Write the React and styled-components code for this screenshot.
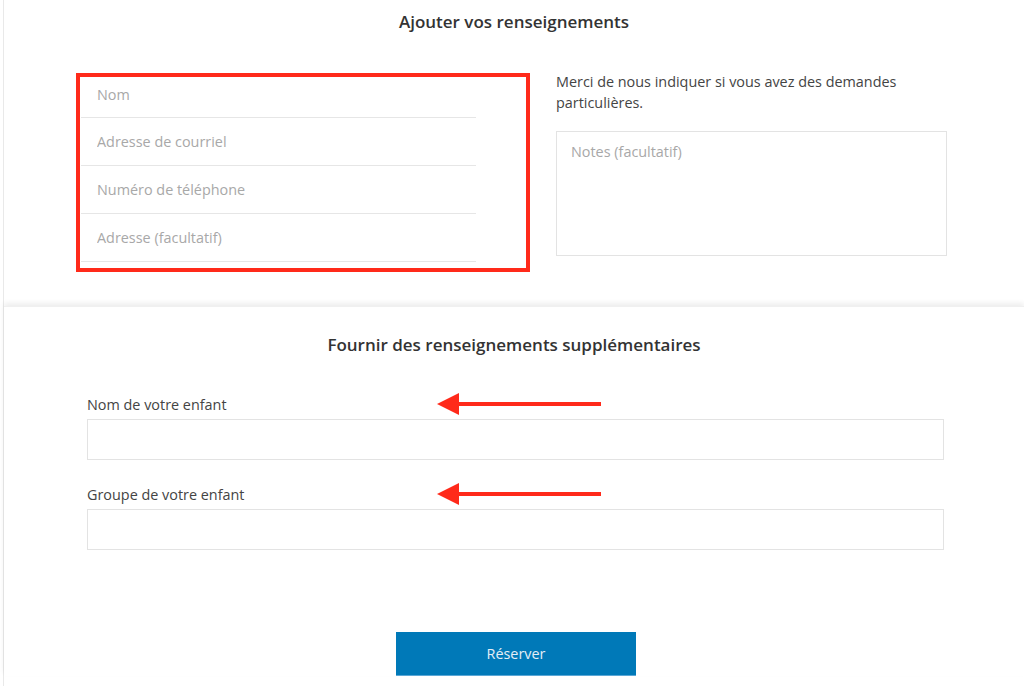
import React from 'react';
import styled, { createGlobalStyle } from 'styled-components';

const GlobalStyle = createGlobalStyle`
  html, body {
    margin: 0;
    padding: 0;
    background: #ffffff;
  }
  body {
    font-family: 'Open Sans', 'Noto Sans', sans-serif;
    color: #333333;
    overflow: hidden;
  }
  * {
    box-sizing: border-box;
  }
`;

const SPage = styled.div`
  margin-left: 3px;
  border-left: 1px solid #e9e9e9;
  min-height: 686px;
`;

const STopSection = styled.section`
  height: 306px;
  padding-top: 10px;
`;

const SBottomSection = styled.section`
  box-shadow: 0 -3px 5px rgba(0, 0, 0, 0.07);
  border-top: 1px solid #f0f0f0;
  padding-top: 26px;
`;

const STitle = styled.h2`
  margin: 0;
  text-align: center;
  font-size: 17px;
  font-weight: 600;
  line-height: 24px;
  color: #333333;
`;

const SColumns = styled.div`
  display: grid;
  grid-template-columns: 454px 391px;
  column-gap: 26px;
  margin: 39px 0 0 72px;
`;

const SHighlightBox = styled.div`
  border: 4px solid #ff2a1a;
  height: 199px;
  padding: 0 50px 0 1px;
`;

const SLineInput = styled.input`
  display: block;
  width: 100%;
  height: ${(props) => (props.$first ? '41px' : '48px')};
  padding: ${(props) => (props.$first ? '0 16px 6px' : '0 16px')};
  border: none;
  border-bottom: 1px solid #e6e6e6;
  outline: none;
  background: transparent;
  font-family: inherit;
  font-size: 14.4px;
  color: #333333;
  &::placeholder {
    color: #a8a8a8;
  }
`;

const SNotesColumn = styled.div`
  display: flex;
  flex-direction: column;
`;

const SHint = styled.p`
  margin: -2px 0 0;
  font-size: 14.4px;
  line-height: 21px;
  color: #444444;
`;

const SNotes = styled.textarea`
  margin-top: 18px;
  width: 391px;
  height: 125px;
  resize: none;
  border: 1px solid #e3e3e3;
  padding: 10px 14px;
  outline: none;
  font-family: inherit;
  font-size: 14.4px;
  line-height: 20px;
  color: #333333;
  &::placeholder {
    color: #a8a8a8;
  }
`;

const SFields = styled.div`
  width: 857px;
  margin: 36px 0 0 83px;
  display: flex;
  flex-direction: column;
  gap: 23px;
`;

const SField = styled.div`
  position: relative;
  display: flex;
  flex-direction: column;
  gap: 2px;
`;

const SLabel = styled.label`
  font-size: 14.4px;
  line-height: 24px;
  color: #444444;
`;

const SBoxInput = styled.input`
  height: 41px;
  border: 1px solid #e3e3e3;
  padding: 0 14px;
  outline: none;
  font-family: inherit;
  font-size: 14.4px;
`;

const SArrow = styled.svg`
  position: absolute;
  left: 350px;
  top: -1px;
`;

const SActions = styled.div`
  display: flex;
  justify-content: center;
  padding: 82px 0 0 4px;
`;

const SButton = styled.button`
  width: 240px;
  height: 44px;
  border: none;
  border-bottom: 1px solid #5aa7d6;
  background: #0079b8;
  color: #e4eef6;
  font-family: inherit;
  font-size: 14.4px;
  cursor: pointer;
`;

function Arrow() {
  return (
    <SArrow width="166" height="24" viewBox="0 0 166 24">
      <line x1="18" y1="12" x2="164" y2="12" stroke="#ff2a1a" strokeWidth="4" />
      <polygon points="0,12 22,1 22,23" fill="#ff2a1a" />
    </SArrow>
  );
}

export default function App() {
  return (
    <>
      <GlobalStyle />
      <SPage>
        <STopSection>
          <STitle>Ajouter vos renseignements</STitle>
          <SColumns>
            <SHighlightBox>
              <SLineInput $first placeholder="Nom" />
              <SLineInput placeholder="Adresse de courriel" />
              <SLineInput placeholder="Numéro de téléphone" />
              <SLineInput placeholder="Adresse (facultatif)" />
            </SHighlightBox>
            <SNotesColumn>
              <SHint>
                Merci de nous indiquer si vous avez des demandes
                <br />
                particulières.
              </SHint>
              <SNotes placeholder="Notes (facultatif)" />
            </SNotesColumn>
          </SColumns>
        </STopSection>
        <SBottomSection>
          <STitle>Fournir des renseignements supplémentaires</STitle>
          <SFields>
            <SField>
              <SLabel>Nom de votre enfant</SLabel>
              <Arrow />
              <SBoxInput />
            </SField>
            <SField>
              <SLabel>Groupe de votre enfant</SLabel>
              <Arrow />
              <SBoxInput />
            </SField>
          </SFields>
          <SActions>
            <SButton>Réserver</SButton>
          </SActions>
        </SBottomSection>
      </SPage>
    </>
  );
}
